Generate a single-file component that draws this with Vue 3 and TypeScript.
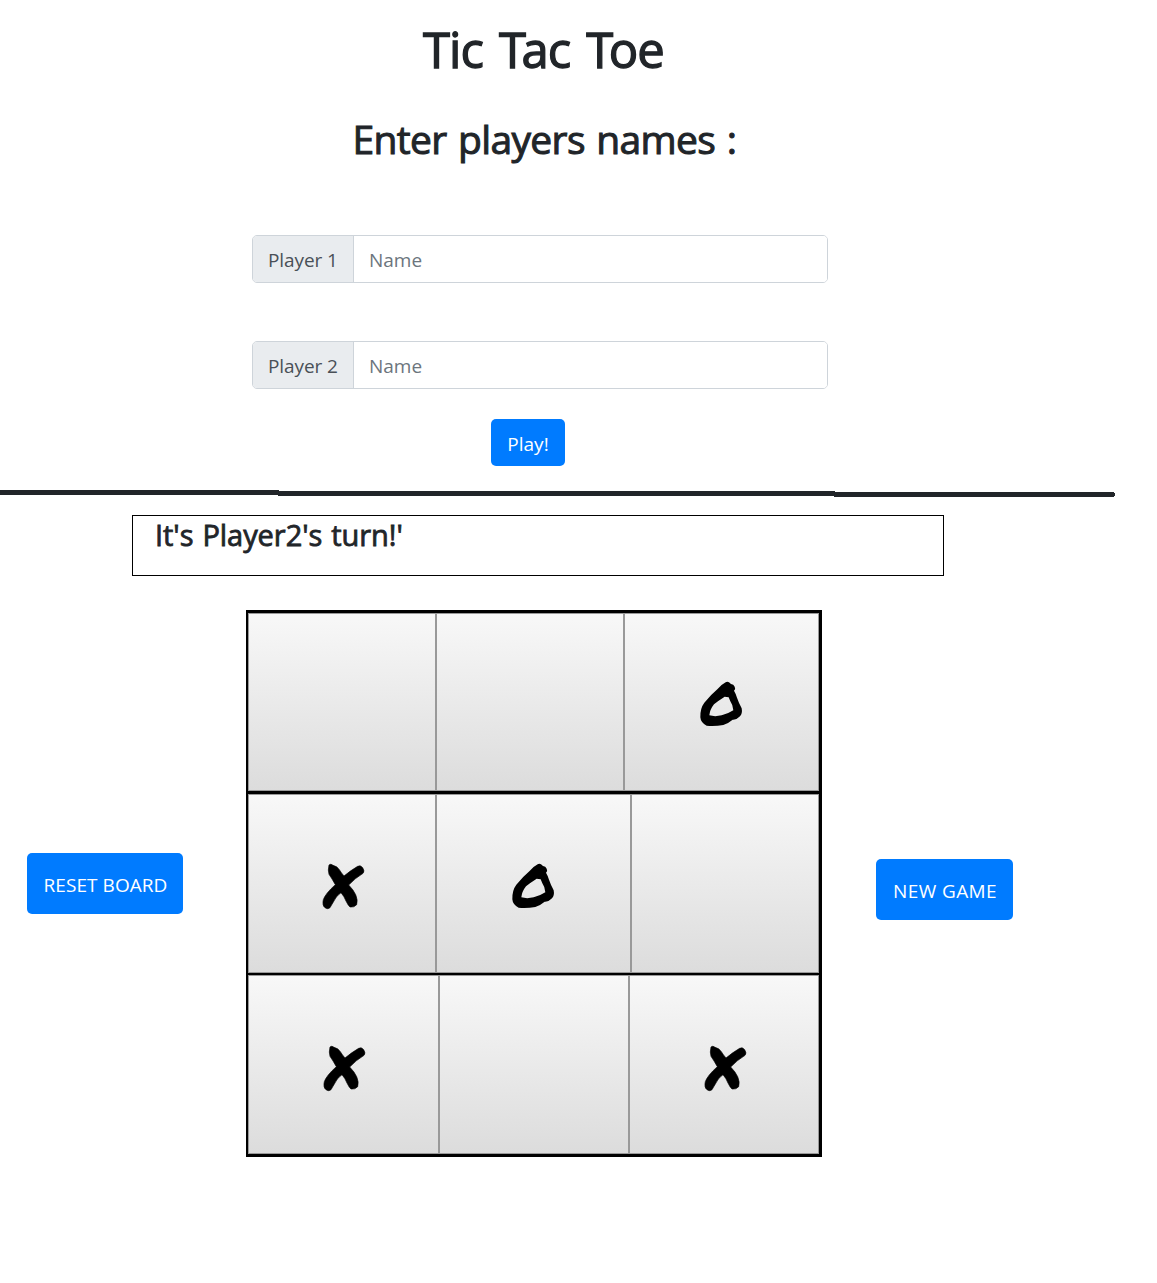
<script setup lang="ts">
import { ref } from 'vue'

type Mark = 'X' | 'O' | ''

interface Row {
  name: string
  cells: Mark[]
}

const players = ref([
  { label: 'Player 1', name: '' },
  { label: 'Player 2', name: '' },
])

const rows = ref<Row[]>([
  { name: 'top', cells: ['', '', 'O'] },
  { name: 'middle', cells: ['X', 'O', ''] },
  { name: 'bottom', cells: ['X', '', 'X'] },
])

const status = ref("It's Player2's turn!'")
</script>

<template>
  <main class="page">
    <h1 class="title">Tic <span class="kern">T</span>ac <span class="kern">T</span>oe</h1>
    <h2 class="subtitle"><span>Enter players names :</span></h2>

    <form class="form" @submit.prevent>
      <div v-for="p in players" :key="p.label" class="group">
        <label class="tag">{{ p.label }}</label>
        <input v-model="p.name" class="field" type="text" placeholder="Name" />
      </div>
      <button class="btn play" type="submit">Play!</button>
    </form>

    <svg class="rule" width="1157" height="7" shape-rendering="crispEdges" fill="#212529">
      <rect x="0" y="0" width="279" height="5" />
      <rect x="278" y="1" width="557" height="5" />
      <rect x="834" y="2" width="280" height="5" />
      <rect x="1114" y="3" width="1" height="3" />
    </svg>

    <div class="status"><span>{{ status }}</span></div>

    <section class="game">
      <button class="btn side reset" type="button">RESET BOARD</button>
      <div class="board">
        <div v-for="row in rows" :key="row.name" class="row" :class="row.name">
          <div v-for="(mark, i) in row.cells" :key="i" class="cell">
            <svg v-if="mark === 'O'" width="64" height="64" viewBox="0 0 192 192">
              <path
                fill-rule="evenodd"
                d="M107 37Q112 33 117 37L123 42Q131 42 134 50Q138 57 132 62Q136 68 141 83Q147 100 155 115Q158 130 150 139Q140 150 128 149Q115 160 100 165Q75 169 50 167Q32 158 31 142Q30 115 43 98Q62 75 82 58Q92 45 107 37ZM104 80Q85 92 72 103Q60 118 58 136Q75 141 95 136Q115 131 130 121Q129 105 121 94L116 82Z"
              />
            </svg>
            <svg v-else-if="mark === 'X'" width="64" height="64" viewBox="-6 -10 192 192">
              <path
                stroke="#000"
                stroke-width="2"
                d="M51 29Q56 24 63 30Q76 33 82 43Q88 53 96 62Q115 46 137 33Q145 28 152 37Q159 48 153 54Q130 68 110 89Q124 103 131 118Q138 134 134 148Q126 157 114 155Q108 150 102 137Q96 122 87 112Q72 122 64 140Q58 150 54 157Q47 163 39 157Q30 150 34 133Q40 115 70 88Q60 70 51 57Q47 45 51 29Z"
              />
            </svg>
          </div>
        </div>
      </div>
      <button class="btn side fresh" type="button">NEW GAME</button>
    </section>
  </main>
</template>

<style>
body {
  margin: 0;
  background: #fff;
}
</style>

<style scoped>
.page {
  box-sizing: border-box;
  width: 1157px;
  height: 1283px;
  padding-top: 19px;
  overflow: hidden;
  color: #212529;
  font-family: 'Open Sans', 'Noto Sans', sans-serif;
  white-space: nowrap;
}
.title {
  margin: 0 0 36px 423px;
  font-size: 49px;
  font-weight: 400;
  line-height: 60px;
  letter-spacing: -0.9px;
  word-spacing: 4px;
  -webkit-text-stroke: 1.3px #212529;
}
.kern {
  letter-spacing: -4.5px;
}
.subtitle {
  margin: 0 0 72px 352.5px;
  font-size: 39px;
  font-weight: 400;
  line-height: 48px;
  letter-spacing: -0.65px;
  word-spacing: 2px;
  -webkit-text-stroke: 1px #212529;
}
.form {
  display: flex;
  flex-direction: column;
  width: 576px;
  margin-left: 252px;
}
.group {
  display: flex;
  box-sizing: border-box;
  height: 48px;
  margin-bottom: 58px;
  border: 1px solid #ced4da;
  border-radius: 5px;
  overflow: hidden;
}
.group:nth-of-type(2) {
  margin-bottom: 30px;
}
.tag {
  box-sizing: border-box;
  flex: none;
  width: 101px;
  padding: 1px 0 0 15px;
  border-right: 1px solid #ced4da;
  background: #e9ecef;
  color: #495057;
  font-size: 19px;
  line-height: 46px;
  letter-spacing: -0.1px;
}
.field {
  flex: 1;
  min-width: 0;
  padding: 2px 15px 0;
  border: 0;
  outline: 0;
  background: #fff;
  font: 19px 'Open Sans', 'Noto Sans', sans-serif;
  letter-spacing: 0;
}
.field::placeholder {
  color: #6c757d;
  opacity: 1;
}
.btn {
  box-sizing: border-box;
  flex: none;
  border: 0;
  border-radius: 5px;
  background: #007bff;
  color: #fff;
  font: 19px 'Open Sans', 'Noto Sans', sans-serif;
  white-space: nowrap;
}
.play {
  width: 74px;
  height: 47px;
  margin-left: 239px;
  padding: 3px 0 0;
  letter-spacing: 0;
}
.rule {
  display: block;
  margin-top: 24px;
}
.status {
  box-sizing: border-box;
  width: 812px;
  height: 61px;
  margin: 18px 0 34px 132px;
  padding-left: 22px;
  border: 1px solid #000;
  font-size: 29px;
  font-weight: 400;
  line-height: 38px;
  letter-spacing: -0.05px;
  word-spacing: 1.5px;
  -webkit-text-stroke: 0.8px #212529;
}
.game {
  display: flex;
  align-items: flex-start;
}
.side {
  height: 61px;
  padding: 3px 0 0;
}
.reset {
  width: 156px;
  margin: 243px 63px 0 27px;
  padding-left: 1px;
  letter-spacing: 0.05px;
}
.fresh {
  width: 137px;
  margin: 249px 0 0 54px;
  padding-left: 1px;
  letter-spacing: 0.4px;
}
.board {
  display: flex;
  flex-direction: column;
  box-sizing: border-box;
  width: 576px;
  height: 547px;
  padding: 3px 3px 3px 2px;
  background: #000;
}
.row {
  display: grid;
  height: 179px;
}
.top {
  grid-template-columns: 188px 188px 195px;
  height: 178px;
  margin-bottom: 3px;
}
.middle {
  grid-template-columns: 188px 195px 188px;
  margin-bottom: 2px;
}
.bottom {
  grid-template-columns: 191px 190px 190px;
}
.cell {
  display: flex;
  align-items: center;
  justify-content: center;
  border: 1px solid #999;
  background: linear-gradient(#f8f8f8, #dcdcdc);
}
.bottom .cell {
  padding: 2px 1px 0 0;
}
</style>
